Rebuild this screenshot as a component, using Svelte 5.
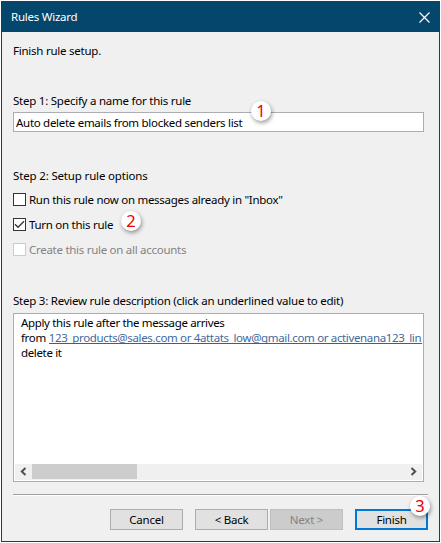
<script lang="ts">
	let ruleName = $state('Auto delete emails from blocked senders list');

	let options = $state([
		{ label: 'Run this rule now on messages already in "Inbox"', checked: false, disabled: false },
		{ label: 'Turn on this rule', checked: true, disabled: false, badge: 2 },
		{ label: 'Create this rule on all accounts', checked: false, disabled: true }
	]);
</script>

<main class="window">
	<header class="titlebar">
		<h1>Rules Wizard</h1>
		<button class="close" aria-label="Close">
			<svg width="11" height="11" viewBox="0 0 11 11">
				<path d="M0.5 0.5 L10.5 10.5 M10.5 0.5 L0.5 10.5" />
			</svg>
		</button>
	</header>

	<div class="content">
		<p class="intro">Finish rule setup.</p>

		<section class="name-step">
			<h2>Step 1: Specify a name for this rule</h2>
			<div class="field">
				<input type="text" bind:value={ruleName} aria-label="Rule name" />
				<span class="badge one">1</span>
			</div>
		</section>

		<section class="options-step">
			<h2>Step 2: Setup rule options</h2>
			{#each options as option}
				<label class="option" class:disabled={option.disabled}>
					<input type="checkbox" bind:checked={option.checked} disabled={option.disabled} />
					<span class="box">
						{#if option.checked}
							<svg width="11" height="11" viewBox="0 0 11 11">
								<path d="M1 5.3 L4 8.3 L10 2.3" />
							</svg>
						{/if}
					</span>
					<span class="text">{option.label}</span>
					{#if option.badge}
						<span class="badge two">{option.badge}</span>
					{/if}
				</label>
			{/each}
		</section>

		<section class="review-step">
			<h2>Step 3: Review rule description (click an underlined value to edit)</h2>
			<div class="description">
				<div class="lines">
					<p>Apply this rule after the message arrives</p>
					<p class="from">
						<span>from</span>
						<span class="value">123_products@sales.com or 4attats_low@gmail.com or activenana123_lin</span>
					</p>
					<p>delete it</p>
				</div>
				<div class="scrollbar">
					<svg class="arrow" width="17" height="15" viewBox="0 0 17 15">
						<path d="M10.5 4 L6.8 7.5 L10.5 11" />
					</svg>
					<div class="thumb"></div>
					<svg class="arrow right" width="17" height="15" viewBox="0 0 17 15">
						<path d="M6.5 4 L10.2 7.5 L6.5 11" />
					</svg>
				</div>
			</div>
		</section>

		<footer>
			<button>Cancel</button>
			<button class="back">&lt; Back</button>
			<button class="next" disabled>Next &gt;</button>
			<button class="finish">Finish<span class="badge three">3</span></button>
		</footer>
	</div>
</main>

<style>
	:global(body) {
		background: #ffffff;
	}

	.window {
		box-sizing: border-box;
		width: 439px;
		height: 541px;
		margin: 1px;
		border: 1px solid #05466c;
		background: #f0f0f0;
		color: #000000;
		font-family: 'Noto Sans', 'Open Sans', sans-serif;
		font-size: 11.5px;
		letter-spacing: -0.24px;
		line-height: 16px;
		white-space: nowrap;
		overflow: hidden;
	}

	h1,
	h2,
	p {
		margin: 0;
		font-size: inherit;
		font-weight: 400;
	}

	button,
	input {
		box-sizing: border-box;
		margin: 0;
		font: inherit;
		letter-spacing: inherit;
	}

	.titlebar {
		display: flex;
		align-items: center;
		justify-content: space-between;
		height: 30px;
		padding: 0 9px;
		background: #05466c;
		color: #ffffff;
	}

	.close {
		display: flex;
		border: 0;
		background: none;
		padding: 0;
	}

	.close svg {
		fill: none;
		stroke: #ffffff;
		stroke-width: 1.2;
	}

	.content {
		padding: 11px 11px 0;
	}

	.name-step {
		margin-top: 34px;
	}

	.field {
		position: relative;
		margin-top: 3px;
	}

	.field input {
		display: block;
		width: 411px;
		height: 20px;
		border: 1px solid #abadb3;
		background: #ffffff;
		padding: 0 2px;
		color: #000000;
		letter-spacing: -0.29px;
		outline: none;
	}

	.options-step {
		margin-top: 36px;
	}

	.options-step h2 {
		margin-bottom: 8px;
		letter-spacing: -0.16px;
	}

	.option {
		display: flex;
		position: relative;
		align-items: center;
		height: 15px;
		margin-bottom: 10px;
	}

	.option input {
		position: absolute;
		opacity: 0;
	}

	.box {
		box-sizing: border-box;
		width: 13px;
		height: 13px;
		margin-right: 3px;
		border: 1px solid #333333;
		background: #ffffff;
	}

	.box svg {
		display: block;
		fill: none;
		stroke: #333333;
		stroke-width: 1.3;
	}

	.text {
		letter-spacing: -0.28px;
		line-height: 15px;
	}

	.disabled {
		color: #838383;
	}

	.disabled .box {
		border-color: #cccccc;
	}

	.review-step {
		margin-top: 36px;
	}

	.description {
		display: flex;
		box-sizing: border-box;
		flex-direction: column;
		justify-content: space-between;
		width: 411px;
		height: 169px;
		margin-top: 4px;
		border: 1px solid #abadb3;
		background: #ffffff;
		padding: 1px;
	}

	.lines {
		padding-left: 6px;
		letter-spacing: -0.35px;
		line-height: 15px;
	}

	.from {
		display: flex;
		gap: 3px;
	}

	.value {
		box-sizing: border-box;
		flex: 1;
		height: 14px;
		border-bottom: 1px solid #2b63a5;
		color: #41699c;
		overflow: hidden;
	}

	.scrollbar {
		display: flex;
		height: 16px;
		background: #f0f0f0;
	}

	.arrow {
		fill: none;
		stroke: #505050;
		stroke-width: 2;
	}

	.thumb {
		width: 105px;
		height: 15px;
		background: #cdcdcd;
	}

	.right {
		margin-left: auto;
	}

	footer {
		display: flex;
		box-sizing: border-box;
		justify-content: flex-end;
		width: 415px;
		margin-top: 12px;
		border-top: 1px solid #a0a0a0;
		box-shadow: inset 0 1px #ffffff;
		padding-top: 14px;
	}

	footer button {
		position: relative;
		width: 73px;
		height: 21px;
		border: 1px solid #adadad;
		background: #e1e1e1;
		padding: 0;
		color: #000000;
		line-height: 18px;
	}

	.back {
		margin-left: 12px;
	}

	footer .next {
		margin-left: 2px;
		border-color: #bfbfbf;
		background: #cccccc;
		color: #838383;
	}

	footer .finish {
		margin-left: 12px;
		border: 2px solid #0078d7;
		line-height: 16px;
	}

	.badge {
		position: absolute;
		width: 20px;
		height: 20px;
		border-radius: 50%;
		background: #ffffff;
		box-shadow: 1px 2px 4px rgba(0, 0, 0, 0.4);
		color: #ee0000;
		font-size: 16.5px;
		letter-spacing: 0;
		line-height: 20px;
		text-align: center;
	}

	.one {
		top: -11px;
		left: 238px;
	}

	.two {
		top: -6px;
		left: 108px;
	}

	.three {
		top: -15px;
		left: 53px;
	}
</style>
